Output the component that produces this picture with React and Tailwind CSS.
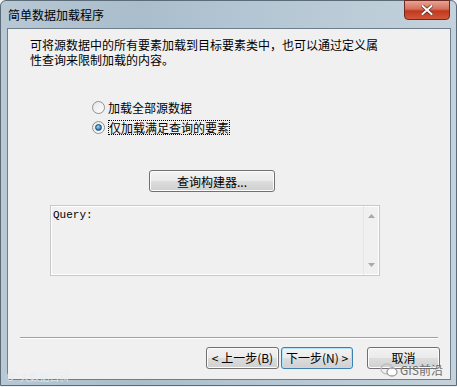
import React from "react";

const cjk = { fontFamily: '"Noto Sans CJK SC", "Noto Sans", sans-serif' };

const Radio = ({ checked }) => (
  <span className="relative flex h-[13px] w-[13px] items-center justify-center rounded-full border border-[#8e8f8f] bg-gradient-to-br from-[#e6e6e6] to-[#ffffff]">
    {checked && (
      <span className="h-[7px] w-[7px] rounded-full border border-[#1b4b7a] bg-[radial-gradient(circle_at_40%_35%,#9fd6f7,#2a73b6_70%)]" />
    )}
  </span>
);

const WinButton = ({ children, className = "", focused = false }) => (
  <div
    className={`flex items-center justify-center rounded-[3px] border text-[12px] text-black ${
      focused ? "border-[#3c7fb1] shadow-[inset_0_0_0_1px_#aee3fa]" : "border-[#707070] shadow-[inset_0_0_0_1px_#fcfcfc]"
    } bg-[linear-gradient(#f2f2f2_0%,#ebebeb_48%,#dddddd_52%,#cfcfcf_100%)] ${className}`}
    style={cjk}
  >
    {children}
  </div>
);

export default function App() {
  return (
    <div className="relative h-[387px] w-[457px] overflow-hidden bg-[#eef2f5]">
      <div className="flex h-[386px] w-[457px] flex-col rounded-t-[6px] border border-[#5b6b78] bg-[linear-gradient(90deg,#b8c8d4_0%,#a9bdcb_30%,#b4c6d3_55%,#c3d2dc_100%)]">
        {/* title bar */}
        <div className="relative flex h-[27px] items-center pl-[7px]">
          <span className="text-[12px] text-black" style={cjk}>
            简单数据加载程序
          </span>
          <div className="absolute right-[6px] top-[-1px] flex h-[20px] w-[46px] items-center justify-center rounded-b-[4px] border border-[#6b2b22] bg-[linear-gradient(#e8a493_0%,#d3705b_45%,#c2381c_55%,#d2573a_100%)]">
            <svg width="12" height="10" viewBox="0 0 12 10">
              <path d="M1.5 1 L10.5 9 M10.5 1 L1.5 9" stroke="#5a2a22" strokeWidth="3.4" strokeLinecap="square" />
              <path d="M1.5 1 L10.5 9 M10.5 1 L1.5 9" stroke="#ffffff" strokeWidth="2" strokeLinecap="square" />
            </svg>
          </div>
        </div>

        {/* client area */}
        <div className="ml-[6px] mr-[5px] flex h-[352px] flex-col border border-[#6f7e8b] bg-[#f0f0f0]">
          <div className="pl-[22px] pt-[8px] text-[12px] leading-[15px] text-black" style={cjk}>
            <div>可将源数据中的所有要素加载到目标要素类中，也可以通过定义属</div>
            <div>性查询来限制加载的内容。</div>
          </div>

          <div className="ml-[84px] mt-[34px] flex flex-col gap-[7px] text-[12px] text-black" style={cjk}>
            <div className="flex h-[13px] items-center gap-[3px]">
              <Radio />
              <span className="leading-[13px]">加载全部源数据</span>
            </div>
            <div className="flex h-[13px] items-center gap-[3px]">
              <Radio checked />
              <span className="border border-dotted border-black leading-[13px]">仅加载满足查询的要素</span>
            </div>
          </div>

          <WinButton className="ml-[141px] mt-[36px] h-[22px] w-[126px] pt-px">
            查询构建器...
          </WinButton>

          <div className="ml-[42px] mt-[13px] flex h-[71px] w-[330px] border border-[#c8c8c8] bg-[#f0f0f0] shadow-[inset_0_0_0_1px_#ffffff]">
            <div className="flex-1 px-[2px] pt-[3px] text-[11px] leading-[13px] text-black" style={{ fontFamily: '"Liberation Mono", monospace' }}>
              Query:
            </div>
            <div className="flex w-[16px] flex-col items-center justify-between border-l border-[#e6e6e6] py-[8px]">
              <svg width="7" height="4" viewBox="0 0 7 4"><path d="M0 4 L3.5 0 L7 4 Z" fill="#a8a8a8" /></svg>
              <svg width="7" height="4" viewBox="0 0 7 4"><path d="M0 0 L3.5 4 L7 0 Z" fill="#a8a8a8" /></svg>
            </div>
          </div>

          <div className="mx-[12px] mt-[61px] h-px bg-[#a0a0a0] shadow-[0_1px_0_#ffffff]" />

          <div className="mt-[9px] flex pl-[198px]">
            <WinButton className="h-[22px] w-[73px]">
              &lt; 上一步(B)
            </WinButton>
            <WinButton focused className="ml-[2px] h-[22px] w-[72px]">
              下一步(N) &gt;
            </WinButton>
            <WinButton className="ml-[14px] h-[22px] w-[73px]">
              取消
            </WinButton>
          </div>
        </div>
      </div>

      {/* watermarks */}
      <div className="absolute bottom-[3px] left-[6px] flex items-center gap-[2px] text-[10px] text-[#e8eef2] opacity-80" style={cjk}>
        <span>ʘ°</span>
        <span>大数据百科</span>
      </div>
      <div className="absolute bottom-[8px] right-[14px] flex items-center gap-[2px] text-[12px] text-[#6f6f6f]" style={cjk}>
        <svg width="18" height="14" viewBox="0 0 18 14">
          <ellipse cx="7" cy="6" rx="6" ry="5" fill="none" stroke="#bdbdbd" strokeWidth="1.3" />
          <ellipse cx="12" cy="9" rx="5" ry="4" fill="#ffffff" stroke="#9a9a9a" strokeWidth="1.3" />
        </svg>
        <span>GIS前沿</span>
      </div>
    </div>
  );
}
